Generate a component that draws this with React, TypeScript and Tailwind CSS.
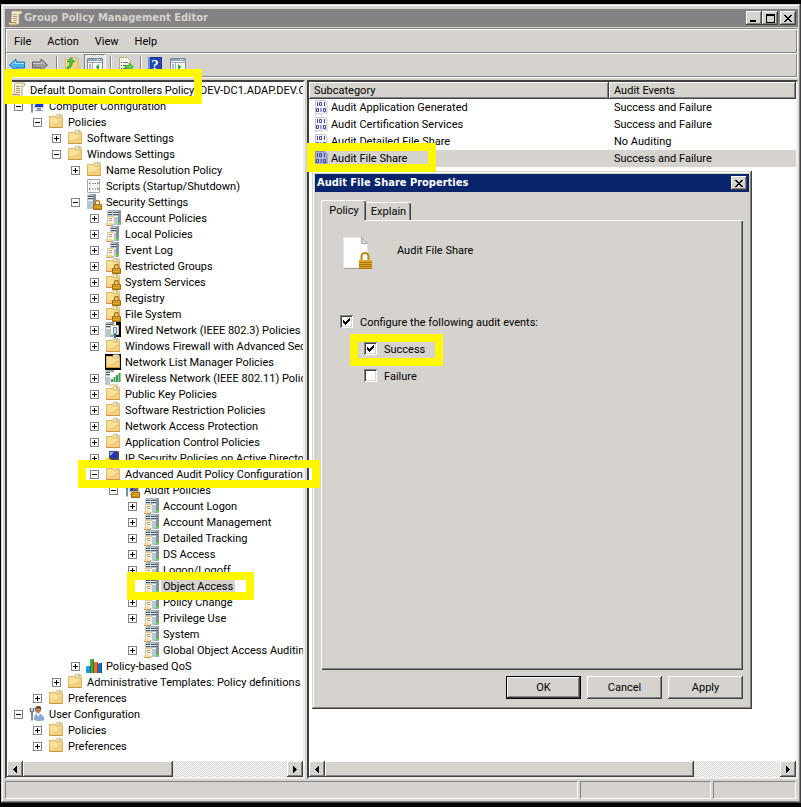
import { useState } from "react"
import type { ReactNode } from "react"
import clsx from "clsx"

type IconName =
    | "scroll" | "computer" | "user" | "folder" | "folderLock" | "folderDark" | "script" | "serverLock"
    | "server" | "serverPair" | "wired" | "wireless" | "ipsec" | "auditRoot" | "qos"

type TreeItem = {
    label: string
    icon: IconName
    expander?: "plus" | "minus"
    children?: TreeItem[]
}

const leaf = (label: string, icon: IconName = "folder"): TreeItem => ({ label, icon })
const closed = (label: string, icon: IconName = "folder"): TreeItem => ({ label, icon, expander: "plus" })
const open = (label: string, icon: IconName, children: TreeItem[]): TreeItem => ({ label, icon, expander: "minus", children })

const tree: TreeItem[] = [
    open("Computer Configuration", "computer", [
        open("Policies", "folder", [
            closed("Software Settings"),
            open("Windows Settings", "folder", [
                closed("Name Resolution Policy"),
                leaf("Scripts (Startup/Shutdown)", "script"),
                open("Security Settings", "serverLock", [
                    closed("Account Policies", "serverPair"),
                    closed("Local Policies", "server"),
                    closed("Event Log", "server"),
                    closed("Restricted Groups", "folderLock"),
                    closed("System Services", "folderLock"),
                    closed("Registry", "folderLock"),
                    closed("File System", "folderLock"),
                    closed("Wired Network (IEEE 802.3) Policies", "wired"),
                    closed("Windows Firewall with Advanced Sec"),
                    leaf("Network List Manager Policies", "folderDark"),
                    closed("Wireless Network (IEEE 802.11) Polic", "wireless"),
                    closed("Public Key Policies"),
                    closed("Software Restriction Policies"),
                    closed("Network Access Protection"),
                    closed("Application Control Policies"),
                    closed("IP Security Policies on Active Director", "ipsec"),
                    open("Advanced Audit Policy Configuration", "folder", [
                        open("Audit Policies", "auditRoot", [
                            closed("Account Logon", "serverPair"),
                            closed("Account Management", "serverPair"),
                            closed("Detailed Tracking", "serverPair"),
                            closed("DS Access", "serverPair"),
                            closed("Logon/Logoff", "serverPair"),
                            leaf("Object Access", "serverPair"),
                            closed("Policy Change", "serverPair"),
                            closed("Privilege Use", "serverPair"),
                            leaf("System", "serverPair"),
                            closed("Global Object Access Auditing", "serverPair"),
                        ]),
                    ]),
                ]),
                closed("Policy-based QoS", "qos"),
            ]),
            closed("Administrative Templates: Policy definitions (A"),
        ]),
        closed("Preferences"),
    ]),
    open("User Configuration", "user", [
        closed("Policies"),
        closed("Preferences"),
    ]),
]

const subcategories = [
    { name: "Audit Application Generated", events: "Success and Failure" },
    { name: "Audit Certification Services", events: "Success and Failure" },
    { name: "Audit Detailed File Share", events: "No Auditing" },
    { name: "Audit File Share", events: "Success and Failure" },
]

const raised = "bg-[#d6d3ce] shadow-[inset_-1px_-1px_#424142,inset_1px_1px_#fff,inset_-2px_-2px_#848284]"

const Folder = () => (
    <>
        <path d="M8 1.500l.5-.8h5l.8.8V4H8z" fill="#fbe7ae" stroke="#cfa24a" strokeWidth=".8" />
        <path d="M10 1.500h3v1h-3z" fill="#fff" />
        <path d="M11 1.500h2v1h-2z" fill="#4aa5e8" />
        <path d="M1 2.500L2 2h5l1.500 1.500H15V14H1z" fill="#fae09a" />
        <path d="M8 9l7-5v10H1v-3z" fill="#f4d07e" />
        <path d="M1.500 13.500V2.500h5.500l1.500 1.500h6v9.500z" fill="none" stroke="#dfb863" />
        <path d="M1 13.500h14" stroke="#c99a45" />
    </>
)

const Lock = () => (
    <>
        <path d="M9.500 11V8.500a2 2 0 0 1 4 0V11" fill="none" stroke="#b07a14" strokeWidth="1.300" />
        <path d="M7.500 10.500h8v5h-8z" fill="#e8ab28" stroke="#a06c10" />
        <path d="M8 12h7v1H8zM8 14h7v1H8z" fill="#c98c18" />
    </>
)

const Tower = ({ x = 5 }: { x?: number }) => (
    <g transform={`translate(${x} 0)`}>
        <path d="M0 1l2-1h6l1 1v14H0z" fill="#a3b1b9" />
        <path d="M0 1h6v14H0z" fill="#b9c7ce" />
        <path d="M6 1l3-1v13l-3 2z" fill="#82919b" />
        <path d="M1 2h5v1H1zM1 4h5v1H1z" fill="#43525d" />
        <path d="M1 3h5v1H1zM1 6h5v1H1z" fill="#f2f6f8" />
        <path d="M6 12h2v2H6z" fill="#4be01f" />
    </g>
)

const Page = () => (
    <>
        <path d="M2 6h7v8H2z" fill="#fbf1d8" />
        <path d="M2 6h7v1H2zM2 6h1v7H2z" fill="#d9c79c" />
        <path d="M4 8h3v1H4zM4 10h3v1H4z" fill="#a99f8c" />
        <path d="M0 13h7v2H1z" fill="#efd9a4" />
        <path d="M1 15h7v1H1z" fill="#c3a05c" />
    </>
)

const Monitor = () => (
    <>
        <path d="M5 2h10v8H5z" fill="#c5cdd6" />
        <path d="M6 3h8v6H6z" fill="#1538c4" />
        <path d="M6 3h4l-4 5z" fill="#5f8bf2" />
        <path d="M8 10h4v2H8zM6 12h8v1H6z" fill="#8c98a6" />
    </>
)

const Wrench = () => (
    <path d="M1.500 2v3L3 6.500 4.500 5V2M3 6v8.500" fill="none" stroke="#5c7388" strokeWidth="1.600" />
)

const drawings: Record<IconName, ReactNode> = {
    scroll: (
        <>
            <path d="M4.500 2.500q0-1.500 1.500-1.500h8q1 0 1 1.500t-1.500 1.500H12v9.500q0 1-1.500 1H4z" fill="#f7eed4" stroke="#b5a27a" />
            <path d="M1.500 13.500q0-1 1-1h6.500v1.500q0 1 1.500 1H3q-1.500 0-1.500-1.500z" fill="#ebdcb0" stroke="#a8925f" />
            <path d="M6 4.500h4M6 6.500h4M6 8.500h4M6 10.500h4" stroke="#a59a80" />
        </>
    ),
    computer: <><Monitor /><Wrench /></>,
    user: (
        <>
            <circle cx="9" cy="4" r="3" fill="#b98056" />
            <path d="M6 4q0-4 3.500-4T12 4q-1-2-3-2t-3 2z" fill="#54361e" />
            <path d="M5 14q-.5-6 4-6.500 6 .5 6.500 6.500-5 2-10.500 0z" fill="#86abd9" />
            <path d="M8 8l1 3 2-3z" fill="#fff" />
            <Wrench />
        </>
    ),
    folder: <Folder />,
    folderLock: <><Folder /><Lock /></>,
    folderDark: <><path d="M0 0h16v16H0z" fill="#000" /><Folder /></>,
    script: (
        <>
            <path d="M1.500 1.500h12v13h-12z" fill="#fff" stroke="#a8a8a8" />
            <path d="M3 7.500h9v1H3z" fill="#ececec" />
            <path d="M4.500 6L3 5.500 4.500 4M11 4l1.500 1.500L11 6M6 5.500h1.500M8.500 5.500H10M4.500 12L3 11l1.500-1.500M11 9.500l1.500 1.500-1.500 1M6 11h1.500M8.500 11H10" fill="none" stroke="#6d6d6d" />
        </>
    ),
    serverLock: <><Tower x={1} /><Lock /></>,
    server: <><Tower /><Page /></>,
    serverPair: <><Tower x={2} /><Tower x={7} /><Page /></>,
    wired: (
        <>
            <path d="M11 0h5v15h-5z" fill="#000" />
            <Tower x={0} />
            <path d="M5.500 3.500h8v9h-8z" fill="#fffdf5" stroke="#cabf9e" />
            <path d="M8.500 5.500h3v6h-3z" fill="#d7e6f5" stroke="#6c86a6" />
            <path d="M9 12h2v4H9z" fill="#2f66c0" />
        </>
    ),
    wireless: (
        <>
            <Tower x={0} />
            <path d="M5 2h11v10l-3 2H5z" fill="#fbfbf6" />
            <path d="M6 12h2V9H6zM8.500 12h2V7h-2zM11 12h2V5h-2zM13.500 12h2V3h-2z" fill="#3f9a52" />
            <path d="M3 14h10v2H3z" fill="#ead9ab" />
        </>
    ),
    ipsec: (
        <>
            <path d="M4 1h9l1 1v9H4z" fill="#4c4c4c" />
            <path d="M5 2h7v6H5z" fill="#2233b8" />
            <path d="M5 2h4L5 6z" fill="#9fb7ff" />
            <path d="M3 11h11v3H3z" fill="#bdbdbd" stroke="#333" />
            <path d="M0 9l3-2 3 3-3 3z" fill="#f3d91c" />
        </>
    ),
    auditRoot: <><Monitor /><Wrench /><Lock /></>,
    qos: (
        <>
            <path d="M0 9l1-1h4v7H0z" fill="#1f97e8" />
            <path d="M4 2l1-1h3v14H4z" fill="#3fae3a" />
            <path d="M8 5l1-1h3v11H8z" fill="#f0672c" />
            <path d="M12 6l1-1h3v10h-4z" fill="#166fc4" />
            <path d="M4 8h1v7H4zM7 2h1v13H7zM11 5h1v10h-1zM15 5h1v10h-1z" fill="#000" opacity=".35" />
        </>
    ),
}

const Icon = ({ name }: { name: IconName }) => (
    <svg viewBox="0 0 16 16" className="size-4 shrink-0" aria-hidden="true">{drawings[name]}</svg>
)

const Expander = ({ kind, label }: { kind?: "plus" | "minus", label: string }) => {
    if (!kind) return <span className="w-[9px] shrink-0" />
    return (
        <button type="button" aria-label={`Toggle ${label}`} className="size-[9px] shrink-0">
            <svg viewBox="0 0 9 9" className="size-[9px]" shapeRendering="crispEdges">
                <path d="M.5.5h8v8h-8z" fill="#fff" stroke="#848284" />
                <path d="M2 4h5v1H2z" />
                {kind === "plus" && <path d="M4 2h1v5H4z" />}
            </svg>
        </button>
    )
}

type TreeListProps = {
    items: TreeItem[]
    selected: string
    onSelect: (label: string) => void
}

const TreeList = ({ items, selected, onSelect }: TreeListProps) => (
    <ul>
        {items.map(item => (
            <li key={item.label}>
                <div className="flex h-4 items-center">
                    <Expander kind={item.expander} label={item.label} />
                    <span className="w-[6px] shrink-0" />
                    <Icon name={item.icon} />
                    <button
                        type="button"
                        onClick={() => onSelect(item.label)}
                        className={clsx("ml-[2px] h-4 px-[2px] pt-px whitespace-nowrap", selected === item.label && "bg-[#d6d3ce]")}
                    >
                        {item.label}
                    </button>
                </div>
                {item.children && (
                    <div className="pl-[19px]">
                        <TreeList items={item.children} selected={selected} onSelect={onSelect} />
                    </div>
                )}
            </li>
        ))}
    </ul>
)

const Arrow = ({ left }: { left?: boolean }) => (
    <svg viewBox="0 0 4 7" className="h-[7px] w-1" shapeRendering="crispEdges">
        <path d={left ? "M4 0v7L0 3.500z" : "M0 0v7l4-3.500z"} />
    </svg>
)

const ScrollBar = ({ thumb }: { thumb: string }) => (
    <div className="flex h-4 shrink-0 bg-[repeating-conic-gradient(#fff_0_25%,#d6d3ce_0_50%)] bg-[length:2px_2px]">
        <button type="button" aria-label="Scroll left" className={clsx("grid w-4 shrink-0 place-items-center", raised)}><Arrow left /></button>
        <div className="flex-1">
            <div className={clsx("h-4", thumb, raised)} />
        </div>
        <button type="button" aria-label="Scroll right" className={clsx("grid w-4 shrink-0 place-items-center", raised)}><Arrow /></button>
    </div>
)

const AuditIcon = ({ tinted }: { tinted: boolean }) => (
    <svg viewBox="0 0 16 16" className="size-4 shrink-0" aria-hidden="true">
        <path d="M1.500.5h9l2.500 2v11l-3-1-2 2-3-1-3.500 1z" fill={tinted ? "#a9b3d8" : "#f6f6fb"} stroke={tinted ? "#8088b0" : "#c4c4d0"} />
        <g fill="none" stroke="#4646a8" strokeWidth="1">
            <path d="M3.500 2v4M5.500 2.500h2v3h-2zM10.500 2v4" />
            <path d="M2.500 8.500h2v3h-2zM7 8v4M9.500 8.500h2v3h-2z" />
        </g>
    </svg>
)

const Separator = () => <div className="h-[18px] w-[2px] border-l border-[#848284] bg-white" />

const WindowGlyph = () => (
    <>
        <path d="M.5 1.500h15v13H.5z" fill="#fff" stroke="#7b8794" />
        <path d="M1 2h14v2H1z" fill="#8fa3bb" />
        <path d="M10 2h1v1h-1zM12 2h1v1h-1z" fill="#fff" />
        <path d="M1 5.500h14M5.500 6v8" stroke="#9aa7b5" />
        <path d="M2 8h2M2 10h2M2 12h2" stroke="#4a6fa5" />
    </>
)

const ToolBar = () => (
    <div className="flex h-[22px] items-center pl-[3px]">
        <button type="button" aria-label="Back">
            <svg viewBox="0 0 16 16" className="size-4"><path d="M.5 8L7 2v3h8.500v6H7v3z" fill="#48b0ee" stroke="#1b6fb8" /><path d="M3 7.500l3.500-3v2H15" fill="none" stroke="#b5e2fb" /></svg>
        </button>
        <button type="button" aria-label="Forward" className="ml-[7px]">
            <svg viewBox="0 0 16 16" className="size-4"><path d="M15.500 8L9 2v3H.5v6H9v3z" fill="#9a9a9a" stroke="#636363" /><path d="M1 6.500h8.500v-2l3 3" fill="none" stroke="#cfcfcf" /></svg>
        </button>
        <span className="w-2" />
        <Separator />
        <button type="button" aria-label="Up one level" className="ml-[6px]">
            <svg viewBox="0 0 16 16" className="size-4">
                <Folder />
                <path d="M3 10q3-1 2.500-5H3l4-4.500L11 5H8.500q0 6-5.500 7z" fill="#4cc43a" stroke="#2a8a20" strokeWidth=".6" />
            </svg>
        </button>
        <button type="button" aria-label="Show console tree" className="ml-1 grid h-[22px] w-[22px] place-items-center border border-[#848284] border-r-white border-b-white bg-[repeating-conic-gradient(#fff_0_25%,#d6d3ce_0_50%)] bg-[length:2px_2px]">
            <svg viewBox="0 0 16 16" className="size-4"><WindowGlyph /><path d="M12 7v6L8.500 10z" fill="#2fa52a" /></svg>
        </button>
        <span className="w-1" />
        <Separator />
        <button type="button" aria-label="Export list" className="ml-[6px]">
            <svg viewBox="0 0 16 16" className="size-4">
                <path d="M1.500.5h8l3 3v12h-11z" fill="#fffbe8" stroke="#b3ab8c" />
                <path d="M5 5.500h5M5 8.500h4M5 11.500h4" stroke="#6b6b8c" />
                <path d="M3 5h1v1H3zM3 8h1v1H3zM3 11h1v1H3z" fill="#44446e" />
                <path d="M7 8.500h4V6l4.500 4-4.500 4v-2.500H7z" fill="#5fce46" stroke="#2b8a20" strokeWidth=".7" />
            </svg>
        </button>
        <span className="w-[6px]" />
        <Separator />
        <button type="button" aria-label="Help" className="ml-[6px] flex h-4 w-[14px] items-center justify-center bg-[#2447b0] font-['Liberation_Serif',serif] text-[15px] leading-4 font-bold text-white shadow-[inset_2px_0_#6d8de0,inset_0_0_0_1px_#19358c]">
            ?
        </button>
        <button type="button" aria-label="Show action pane" className="ml-2">
            <svg viewBox="0 0 16 16" className="size-4"><WindowGlyph /><path d="M8 7v6l3.500-3z" fill="#2fa52a" /></svg>
        </button>
    </div>
)

const captionButton = clsx("grid h-[14px] w-4 place-items-center", raised)

const CloseGlyph = () => (
    <svg viewBox="0 0 8 7" className="h-[7px] w-2" shapeRendering="crispEdges">
        <path d="M0 0h2v1h1v1h2V1h1V0h2v1H7v1H6v1H5v1h1v1h1v1h1v1H6V6H5V5H3v1H2v1H0V6h1V5h1V4h1V3H2V2H1V1H0z" />
    </svg>
)

type CheckProps = {
    id: string
    label: string
    checked: boolean
    onChange: (checked: boolean) => void
}

const Check = ({ id, label, checked, onChange }: CheckProps) => (
    <div className="flex h-[27px] items-center">
        <span className="grid">
            <input
                id={id}
                type="checkbox"
                checked={checked}
                onChange={e => onChange(e.target.checked)}
                className="peer size-[13px] appearance-none bg-white shadow-[inset_1px_1px_#848284,inset_-1px_-1px_#fff,inset_2px_2px_#424142,inset_-2px_-2px_#d6d3ce] [grid-area:1/1]"
            />
            <svg viewBox="0 0 7 7" shapeRendering="crispEdges" className="pointer-events-none invisible size-[7px] place-self-center peer-checked:visible [grid-area:1/1]">
                <path d="M0 2h1v1h1v1h1V3h1V2h1V1h1V0h1v3H6v1H5v1H4v1H3v1H2V6H1V5H0z" />
            </svg>
        </span>
        <label htmlFor={id} className="pt-[2px] pl-[7px]">{label}</label>
    </div>
)

const PropertiesDialog = () => {
    const [configure, setConfigure] = useState(true)
    const [success, setSuccess] = useState(true)
    const [failure, setFailure] = useState(false)

    return (
        <div role="dialog" aria-labelledby="dialog-title" className="absolute top-[171px] left-[312px] w-[440px] bg-[#d6d3ce] p-[3px] shadow-[inset_-1px_-1px_#424142,inset_1px_1px_#d6d3ce,inset_-2px_-2px_#848284,inset_2px_2px_#fff]">
            <div className="flex h-[18px] items-center justify-between bg-[#08246b] px-[2px] text-white">
                <h2 id="dialog-title" className="font-['DejaVu_Sans_Condensed',sans-serif] font-bold">Audit File Share Properties</h2>
                <button type="button" aria-label="Close" className={clsx(captionButton, "text-black")}><CloseGlyph /></button>
            </div>
            <div className="px-[6px] pt-2 pb-[7px]">
                <div role="tablist" className="flex items-end">
                    <button type="button" role="tab" aria-selected="true" className="h-5 w-[45px] rounded-t-[2px] border-t border-l border-white shadow-[inset_-1px_0_#424142,inset_-2px_0_#848284]">Policy</button>
                    <button type="button" role="tab" aria-selected="false" className="h-[18px] w-[45px] rounded-t-[2px] border-t border-white shadow-[inset_-1px_0_#424142,inset_-2px_0_#848284]">Explain</button>
                    <span className="flex-1" />
                </div>
                <div role="tabpanel" className="flex flex-col shadow-[inset_1px_0_#fff,inset_-1px_-1px_#424142,inset_-2px_-2px_#848284]">
                    <div className="flex h-px"><span className="w-[45px]" /><span className="flex-1 bg-white" /></div>
                    <div className="h-[449px] pt-4 pl-[19px]">
                        <div className="flex gap-[23px] pl-[3px]">
                            <svg viewBox="0 0 31 34" className="h-[34px] w-[31px]">
                                <path d="M.5.5h18l6 6V31H.5z" fill="#fdfdfd" stroke="#e8e6e4" />
                                <path d="M18.500.5v6h6z" fill="#dcdcdc" stroke="#a8a8a8" />
                                <path d="M1 31.500h16" stroke="#a39f98" />
                                <path d="M18.500 23v-3.500a3.500 3.500 0 0 1 7 0V23" fill="none" stroke="#b5891b" strokeWidth="2" />
                                <path d="M16 23h13v9H16z" fill="#e2a721" />
                                <path d="M16 25h13v1H16zM16 27h13v1H16zM16 29h13v1H16zM16 31h13v1H16z" fill="#a8730f" />
                            </svg>
                            <p className="pt-[6px]">Audit File Share</p>
                        </div>
                        <div className="pt-[37px]">
                            <Check id="configure" label="Configure the following audit events:" checked={configure} onChange={setConfigure} />
                            <div className="pl-6">
                                <Check id="success" label="Success" checked={success} onChange={setSuccess} />
                                <Check id="failure" label="Failure" checked={failure} onChange={setFailure} />
                            </div>
                        </div>
                    </div>
                </div>
                <div className="flex justify-end gap-[6px] pt-[6px]">
                    <button type="button" className="h-[23px] w-[75px] border border-black bg-[#d6d3ce] shadow-[inset_-1px_-1px_#424142,inset_1px_1px_#fff,inset_-2px_-2px_#848284]">OK</button>
                    <button type="button" className={clsx("h-[23px] w-[75px]", raised)}>Cancel</button>
                    <button type="button" className={clsx("h-[23px] w-[75px]", raised)}>Apply</button>
                </div>
            </div>
        </div>
    )
}

const pane = "border-2 border-t-[#424142] border-l-[#424142] border-r-[#efefef] border-b-[#efefef] bg-white"
const headerCell = "h-[17px] bg-[#d6d3ce] p-0 text-left font-normal shadow-[inset_-1px_-1px_#424142,inset_1px_1px_#fff,inset_-2px_-2px_#848284]"
const statusCell = "border border-t-[#848284] border-l-[#848284] border-r-white border-b-white"
const highlight = "pointer-events-none absolute border-8 border-[#fff700]"

export default function App() {
    const [selected, setSelected] = useState("Object Access")

    return (
        <div className="relative flex min-h-screen flex-col bg-black pt-1 pb-1 pl-px font-['Roboto','Liberation_Sans',sans-serif] text-[11px] leading-4 text-black">
            <div className="flex flex-1 flex-col bg-[#d6d3ce] pt-[5px] pr-[3px] pb-1 pl-1 shadow-[inset_-1px_-1px_#424142,inset_1px_1px_#d6d3ce,inset_-2px_-2px_#848284,inset_2px_2px_#fff]">
                <header className="flex h-[18px] items-center bg-[#848284] pr-[2px] pl-[2px] text-[#d6d3ce]">
                    <Icon name="scroll" />
                    <h1 className="flex-1 pl-px font-['DejaVu_Sans_Condensed',sans-serif] font-bold">Group Policy Management Editor</h1>
                    <button type="button" aria-label="Minimize" className={captionButton}>
                        <svg viewBox="0 0 8 8" className="size-2"><path d="M0 6h6v2H0z" fill="#000" /></svg>
                    </button>
                    <button type="button" aria-label="Maximize" className={captionButton}>
                        <svg viewBox="0 0 9 9" className="size-[9px]" shapeRendering="crispEdges"><path d="M0 0h9v9H0zM1 2v6h7V2z" fill="#000" fillRule="evenodd" /></svg>
                    </button>
                    <button type="button" aria-label="Close" className={clsx("ml-[2px] text-black", captionButton)}><CloseGlyph /></button>
                </header>

                <div className="mt-px border border-[#848284] border-r-white border-b-white shadow-[inset_1px_1px_#fff,inset_-1px_-1px_#848284]">
                    <nav className="mt-px flex h-[23px] items-center border-b border-[#848284]">
                        {["File", "Action", "View", "Help"].map(item => (
                            <button key={item} type="button" className="px-2 pt-[2px]">{item}</button>
                        ))}
                    </nav>
                    <div className="border-t border-white pb-px">
                        <ToolBar />
                    </div>
                </div>

                <main className="mt-[2px] flex min-h-0 flex-1">
                    <section className={clsx("flex w-[300px] shrink-0 flex-col", pane)}>
                        <div className="flex-1 overflow-hidden pb-[7px]">
                            <div className="flex h-4 items-center pl-[3px] whitespace-nowrap">
                                <Icon name="scroll" />
                                <span className="h-4 pt-px pl-1">Default Domain Controllers Policy [DEV-DC1.ADAP.DEV.C</span>
                            </div>
                            <div className="pl-[7px]">
                                <TreeList items={tree} selected={selected} onSelect={setSelected} />
                            </div>
                        </div>
                        <ScrollBar thumb="w-[57%]" />
                    </section>

                    <section className={clsx("ml-[2px] flex min-w-0 flex-1 flex-col", pane)}>
                        <div className="flex-1">
                            <table className="w-full table-fixed border-collapse">
                                <thead>
                                    <tr>
                                        <th className={clsx("w-[300px]", headerCell)}><span className="pl-[5px]">Subcategory</span></th>
                                        <th className={headerCell}><span className="pl-[5px]">Audit Events</span></th>
                                    </tr>
                                </thead>
                                <tbody>
                                    {subcategories.map(row => (
                                        <tr key={row.name} className={clsx("h-[17px]", row.name === "Audit File Share" && "bg-[#d6d3ce]")}>
                                            <td className="p-0 pl-[5px]">
                                                <div className="flex h-[17px] items-center gap-px">
                                                    <AuditIcon tinted={row.name === "Audit File Share"} />
                                                    <span className="pt-px">{row.name}</span>
                                                </div>
                                            </td>
                                            <td className="p-0 pt-px pl-[5px]">{row.events}</td>
                                        </tr>
                                    ))}
                                </tbody>
                            </table>
                        </div>
                        <ScrollBar thumb="w-[81%]" />
                    </section>
                </main>

                <footer className="mt-[2px] flex h-[18px] gap-[2px] pr-[2px]">
                    <div className={clsx("flex-1", statusCell)} />
                    <div className={clsx("w-[131px]", statusCell)} />
                    <div className={clsx("w-[83px]", statusCell)} />
                </footer>
            </div>

            <PropertiesDialog />

            <div className={clsx("top-[69px] left-1 h-[35px] w-[198px]", highlight)} />
            <div className={clsx("top-[143px] left-[307px] h-[29px] w-[129px]", highlight)} />
            <div className={clsx("top-[334px] left-[350px] h-8 w-[93px]", highlight)} />
            <div className={clsx("top-[460px] left-[78px] h-7 w-[242px]", highlight)} />
            <div className={clsx("top-[572px] left-[127px] h-7 w-[127px]", highlight)} />
        </div>
    )
}
